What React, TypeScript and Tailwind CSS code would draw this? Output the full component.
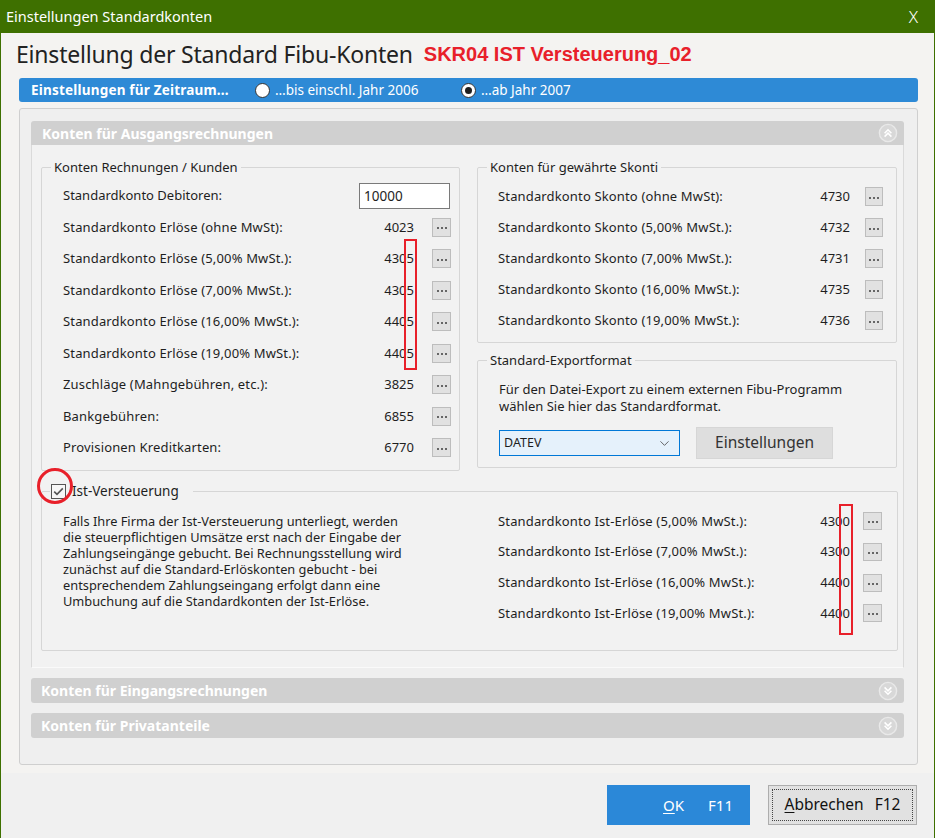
import { ChevronDown } from 'lucide-react';

const font = "font-['Noto_Sans',sans-serif]";

const DotsButton = ({ w = 19, h = 19 }: { w?: number; h?: number }) => (
  <button
    className="flex items-center justify-center gap-[2px] bg-[#e1e1e1] border border-[#bdbdbd] shrink-0"
    style={{ width: w, height: h }}
  >
    <span className="w-[2px] h-[2px] bg-[#666] mt-[2px]" />
    <span className="w-[2px] h-[2px] bg-[#666] mt-[2px]" />
    <span className="w-[2px] h-[2px] bg-[#666] mt-[2px]" />
  </button>
);

const CircleChevrons = ({ up }: { up: boolean }) => (
  <svg width="20" height="20" viewBox="0 0 20 20">
    <circle cx="10" cy="10" r="8.6" fill="#d8d8d8" stroke="#e9e9e9" strokeWidth="1.4" />
    {up ? (
      <path d="M6.6 10.2 L10 6.8 L13.4 10.2 M6.6 13.6 L10 10.2 L13.4 13.6" fill="none" stroke="#fff" strokeWidth="1.6" />
    ) : (
      <path d="M6.6 6.4 L10 9.8 L13.4 6.4 M6.6 9.8 L10 13.2 L13.4 9.8" fill="none" stroke="#fff" strokeWidth="1.6" />
    )}
  </svg>
);

const Radio = ({ checked }: { checked: boolean }) => (
  <span className="w-[15px] h-[15px] rounded-full bg-white border border-[#333] flex items-center justify-center shrink-0">
    {checked && <span className="w-[7px] h-[7px] rounded-full bg-[#1f1f1f]" />}
  </span>
);

const leftRows = [
  { label: 'Standardkonto Erlöse (ohne MwSt):', value: '4023' },
  { label: 'Standardkonto Erlöse (5,00% MwSt.):', value: '4305' },
  { label: 'Standardkonto Erlöse (7,00% MwSt.):', value: '4305' },
  { label: 'Standardkonto Erlöse (16,00% MwSt.):', value: '4405' },
  { label: 'Standardkonto Erlöse (19,00% MwSt.):', value: '4405' },
  { label: 'Zuschläge (Mahngebühren, etc.):', value: '3825' },
  { label: 'Bankgebühren:', value: '6855' },
  { label: 'Provisionen Kreditkarten:', value: '6770' },
];

const skontoRows = [
  { label: 'Standardkonto Skonto (ohne MwSt):', value: '4730' },
  { label: 'Standardkonto Skonto (5,00% MwSt.):', value: '4732' },
  { label: 'Standardkonto Skonto (7,00% MwSt.):', value: '4731' },
  { label: 'Standardkonto Skonto (16,00% MwSt.):', value: '4735' },
  { label: 'Standardkonto Skonto (19,00% MwSt.):', value: '4736' },
];

const istRows = [
  { label: 'Standardkonto Ist-Erlöse (5,00% MwSt.):', value: '4300' },
  { label: 'Standardkonto Ist-Erlöse (7,00% MwSt.):', value: '4300' },
  { label: 'Standardkonto Ist-Erlöse (16,00% MwSt.):', value: '4400' },
  { label: 'Standardkonto Ist-Erlöse (19,00% MwSt.):', value: '4400' },
];

const istText = [
  'Falls Ihre Firma der Ist-Versteuerung unterliegt, werden',
  'die steuerpflichtigen Umsätze erst nach der Eingabe der',
  'Zahlungseingänge gebucht. Bei Rechnungsstellung wird',
  'zunächst auf die Standard-Erlöskonten gebucht - bei',
  'entsprechendem Zahlungseingang erfolgt dann eine',
  'Umbuchung auf die Standardkonten der Ist-Erlöse.',
];

const App = () => {
  return (
    <div
      className={`w-[935px] h-[838px] flex flex-col bg-[#f4f3f1] border-x border-[#3e7000] overflow-hidden text-[#1e1e1e] ${font}`}
    >
      {/* Title bar */}
      <div className="h-[33px] shrink-0 bg-[#3e7000] flex items-center justify-between pl-[5px] pr-[16px] text-white">
        <span className="text-[14.5px]">Einstellungen Standardkonten</span>
        <span className="text-[17px] font-light">X</span>
      </div>

      {/* Heading */}
      <div className="h-[45px] shrink-0 flex items-center pl-[15px] pb-[3px]">
        <h1 className="text-[23px] text-[#222] tracking-[-0.2px]">Einstellung der Standard Fibu-Konten</h1>
        <span className="ml-[11px] font-['Liberation_Sans',sans-serif] font-bold text-[20px] text-[#e8202a]">
          SKR04 IST Versteuerung_02
        </span>
      </div>

      {/* Zeitraum bar */}
      <div className="ml-[18px] w-[899px] h-[24px] shrink-0 rounded-[3px] bg-[#2e8ad6] flex items-center pl-[12px] text-white text-[13.5px]">
        <span className="w-[224px] font-bold tracking-[0.2px]">Einstellungen für Zeitraum...</span>
        <span className="w-[206px] flex items-center gap-[5px]">
          <Radio checked={false} />
          …bis einschl. Jahr 2006
        </span>
        <span className="flex items-center gap-[5px]">
          <Radio checked={true} />
          …ab Jahr 2007
        </span>
      </div>

      {/* Outer panel */}
      <div className="ml-[18px] mt-[6px] w-[899px] h-[657px] shrink-0 border border-[#cfcfcf] rounded-[3px] bg-[#efefef] pt-[12px] pl-[11px] flex flex-col">
        <div className="w-[873px]">
          <div className="h-[24px] rounded-t-[3px] bg-[#d0d0d0] flex items-center justify-between pl-[11px] pr-[6px] text-white font-bold text-[14px]">
            <span>Konten für Ausgangsrechnungen</span>
            <CircleChevrons up={true} />
          </div>

          <div className="h-[523px] border border-t-0 border-[#dadada] border-b-[#fafafa] bg-[#f2f2f2] pt-[14px] pl-[9px] text-[13px]">
            <div className="flex items-start gap-[17px]">
              {/* Konten Rechnungen / Kunden */}
              <fieldset className="w-[419px] border border-[#d6d6d6] rounded-[2px]">
                <legend className="ml-[9px] px-[3px] leading-[17px]">Konten Rechnungen / Kunden</legend>
                <div className="relative pt-[4px] pb-[6px]">
                  <div className="h-[31.5px] flex items-center pl-[21px] pr-[9px]">
                    <span className="flex-1">Standardkonto Debitoren:</span>
                    <div className="w-[91px] h-[26px] border border-[#7a7a7a] bg-white flex items-center pl-[4px] text-[13.5px]">
                      10000
                    </div>
                  </div>
                  {leftRows.map((r) => (
                    <div key={r.label} className="h-[31.5px] flex items-center pl-[21px] pr-[8px]">
                      <span className="flex-1 tracking-[0.15px]">{r.label}</span>
                      <span>{r.value}</span>
                      <span className="ml-[18px]">
                        <DotsButton />
                      </span>
                    </div>
                  ))}
                  <div className="absolute left-[362px] top-[63px] w-[13px] h-[131px] border-2 border-[#e8202a]" />
                </div>
              </fieldset>

              <div className="w-[420px] flex flex-col">
                {/* Skonti */}
                <fieldset className="border border-[#d6d6d6] rounded-[2px]">
                  <legend className="ml-[9px] px-[3px] leading-[17px]">Konten für gewährte Skonti</legend>
                  <div className="pt-[5px] pb-[6px]">
                    {skontoRows.map((r) => (
                      <div key={r.label} className="h-[31px] flex items-center pl-[20px] pr-[13px]">
                        <span className="flex-1 tracking-[0.15px]">{r.label}</span>
                        <span>{r.value}</span>
                        <span className="ml-[15px]">
                          <DotsButton w={18} />
                        </span>
                      </div>
                    ))}
                  </div>
                </fieldset>

                {/* Export */}
                <fieldset className="mt-[9px] border border-[#d6d6d6] rounded-[2px]">
                  <legend className="ml-[9px] px-[3px] leading-[17px]">Standard-Exportformat</legend>
                  <div className="pt-[12px] pl-[21px] pb-[8px]">
                    <p className="leading-[17px]">
                      Für den Datei-Export zu einem externen Fibu-Programm
                      <br />
                      wählen Sie hier das Standardformat.
                    </p>
                    <div className="mt-[12px] flex items-center gap-[16px]">
                      <div className="w-[181px] h-[26px] border border-[#0078d7] bg-[#e5f1fb] flex items-center justify-between pl-[4px] pr-[7px] text-[12.5px]">
                        <span>DATEV</span>
                        <ChevronDown size={15} strokeWidth={1.3} color="#444" />
                      </div>
                      <button className="w-[137px] h-[32px] bg-[#dedede] border border-[#d6d6d6] text-[15.5px] text-[#333]">
                        Einstellungen
                      </button>
                    </div>
                  </div>
                </fieldset>
              </div>
            </div>

            {/* Ist-Versteuerung */}
            <fieldset className="mt-[12px] w-[857px] border border-[#d6d6d6] rounded-[2px]">
              <legend className="ml-[8px] pl-[1px] pr-[14px] leading-[17px]">
                <span className="relative flex items-center">
                  <span className="w-[15px] h-[15px] border border-[#555] bg-[#f7f7f7] flex items-center justify-center">
                    <svg width="13" height="13" viewBox="0 0 13 13">
                      <path d="M2.2 6.6 L5 9.4 L10.8 3.4" fill="none" stroke="#555" strokeWidth="1.6" />
                    </svg>
                  </span>
                  <span className="ml-[6px] text-[13.5px]">Ist-Versteuerung</span>
                  <span className="absolute left-[-14px] top-[-15px] w-[36px] h-[36px] rounded-full border-[3px] border-[#e8202a]" />
                </span>
              </legend>
              <div className="flex items-start pt-[6.5px] pb-[21px]">
                <div className="w-[436px] pl-[21px] pt-[7px] text-[12.8px]">
                  {istText.map((line) => (
                    <div key={line} className="h-[16px] leading-[16px] whitespace-nowrap">
                      {line}
                    </div>
                  ))}
                </div>
                <div className="flex-1 relative">
                  {istRows.map((r) => (
                    <div key={r.label} className="h-[30.7px] flex items-center pl-[20px] pr-[15px]">
                      <span className="flex-1 tracking-[0.15px]">{r.label}</span>
                      <span>{r.value}</span>
                      <span className="ml-[13px]">
                        <DotsButton h={18} />
                      </span>
                    </div>
                  ))}
                  <div className="absolute left-[361px] top-[-2px] w-[14px] h-[131px] border-2 border-[#e8202a]" />
                </div>
              </div>
            </fieldset>
          </div>

          <div className="mt-[10px] h-[25px] rounded-[3px] bg-[#d0d0d0] flex items-center justify-between pl-[10px] pr-[6px] text-white font-bold text-[14px]">
            <span>Konten für Eingangsrechnungen</span>
            <CircleChevrons up={false} />
          </div>
          <div className="mt-[10px] h-[25px] rounded-[3px] bg-[#d0d0d0] flex items-center justify-between pl-[10px] pr-[6px] text-white font-bold text-[14px]">
            <span>Konten für Privatanteile</span>
            <CircleChevrons up={false} />
          </div>
        </div>
      </div>

      {/* Footer */}
      <div className="mt-[8px] flex-1 bg-[#f0f0f0] flex justify-end items-start pt-[12px] pr-[17px] gap-[18px]">
        <button className="w-[143px] h-[40px] bg-[#2b88d8] text-white text-[15px] flex items-center justify-end pr-[17px] gap-[24px]">
          <span>
            <span className="underline underline-offset-2">O</span>K
          </span>
          <span>F11</span>
        </button>
        <button className="w-[149px] h-[40px] bg-[#e1e1e1] border border-[#adadad] p-[3px]">
          <span className="w-full h-full border border-dotted border-[#444] flex items-center justify-center gap-[11px] text-[15.5px] text-[#111]">
            <span>
              <span className="underline underline-offset-2">A</span>bbrechen
            </span>
            <span>F12</span>
          </span>
        </button>
      </div>
    </div>
  );
};

export default App;
